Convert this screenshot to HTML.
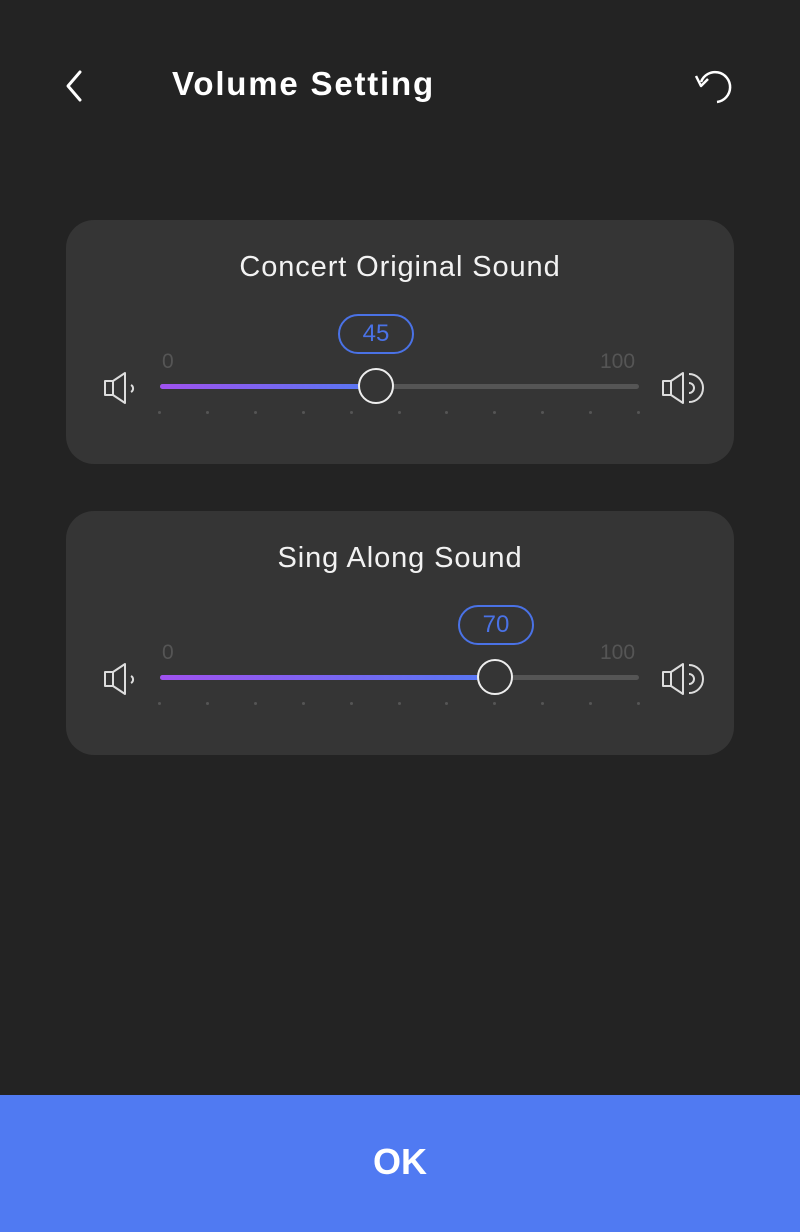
<!DOCTYPE html><html><head><style>
body{margin:0;width:800px;height:1232px;background:#232323;font-family:"Liberation Sans",sans-serif;position:relative;overflow:hidden;color:#fff}
.a{position:absolute}
.card{position:absolute;left:66px;width:668px;height:244px;background:#353535;border-radius:28px}
.t{position:absolute;left:0;width:100%;text-align:center;font-size:29px;letter-spacing:0.9px;top:31px;color:#f2f2f2}
.track{position:absolute;left:94px;width:479px;height:5px;top:164px;background:#555;border-radius:3px}
.fill{position:absolute;left:0;top:0;height:5px;border-radius:3px;background:linear-gradient(90deg,#a052f0,#5578f2)}
.thumb{position:absolute;top:-16px;width:32px;height:32px;margin-left:-18px;border:2.5px solid #eee;border-radius:50%;background:#353535}
.bub{position:absolute;top:94px;width:72px;height:36px;margin-left:-38px;border:2px solid #4a72e6;border-radius:20px;color:#4a72e6;font-size:24px;text-align:center;line-height:36px}
.lab{position:absolute;top:130px;color:#555;font-size:21px}
.tick{position:absolute;top:191px;width:3px;height:3px;background:#555;border-radius:50%}
</style></head><body>
<svg class="a" style="left:60px;top:68px" width="30" height="36"><path d="M20 4 L8 18 L20 32" stroke="#fff" stroke-width="3" fill="none" stroke-linecap="round" stroke-linejoin="round"/></svg>
<div class="a" style="left:172px;top:65px;font-size:33px;font-weight:bold;letter-spacing:1.8px">Volume Setting</div>
<svg class="a" style="left:690px;top:62px" width="50" height="50"><path d="M11 20 A15 15 0 1 1 27 40" stroke="#fff" stroke-width="2.5" fill="none"/><path d="M6 14 L11 24 L18 17" stroke="#fff" stroke-width="2.5" fill="none" stroke-linejoin="round"/></svg>

<div class="card" style="top:220px"><div class="t">Concert Original Sound</div>
<div class="bub" style="left:310px">45</div>
<div class="lab" style="left:96px">0</div><div class="lab" style="left:534px">100</div>
<div class="track"><div class="fill" style="width:216px"></div><div class="thumb" style="left:216px"></div></div>
<div id="t1"></div></div>

<div class="card" style="top:511px"><div class="t">Sing Along Sound</div>
<div class="bub" style="left:430px">70</div>
<div class="lab" style="left:96px">0</div><div class="lab" style="left:534px">100</div>
<div class="track"><div class="fill" style="width:335px"></div><div class="thumb" style="left:335px"></div></div>
<div id="t2"></div></div>

<div class="a" style="left:0;top:1095px;width:800px;height:137px;background:#507af2;text-align:center;line-height:134px;font-size:36px;font-weight:bold">OK</div>
<script>
['t1','t2'].forEach(function(id){var h='';for(var i=0;i<11;i++)h+='<div class="tick" style="left:'+(92+i*47.9)+'px"></div>';document.getElementById(id).outerHTML=h;});
[220,511].forEach(function(y){
document.body.insertAdjacentHTML('beforeend','<svg class="a" style="left:100px;top:'+(y+150)+'px" width="42" height="36"><path d="M5 11 H13 L25 3 V33 L13 25 H5 Z M13 11 V25" stroke="#ddd" stroke-width="2" fill="none" stroke-linejoin="round"/><path d="M31 15 A4 4 0 0 1 31 22" stroke="#ddd" stroke-width="2" fill="none"/></svg><svg class="a" style="left:658px;top:'+(y+150)+'px" width="52" height="36"><path d="M5 11 H13 L25 3 V33 L13 25 H5 Z M13 11 V25" stroke="#ddd" stroke-width="2" fill="none" stroke-linejoin="round"/><path d="M31 13 A5 5 0 0 1 31 23" stroke="#ddd" stroke-width="2" fill="none"/><path d="M31 4 A14 14 0 0 1 31 32" stroke="#ddd" stroke-width="2" fill="none"/></svg>');});
</script>
</body></html>
